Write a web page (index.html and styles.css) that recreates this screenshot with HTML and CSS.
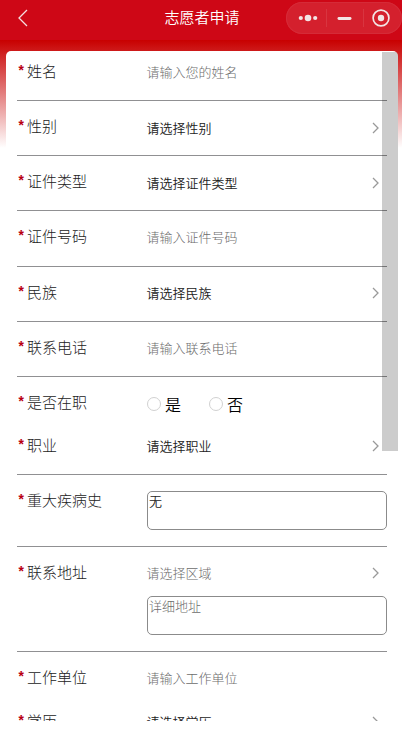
FILE: index.html
```html
<!DOCTYPE html>
<html lang="zh-CN">
<head>
<meta charset="utf-8">
<title>志愿者申请</title>
<link rel="stylesheet" href="styles.css">
</head>
<body>
<div class="app">
  <header class="nav">
    <svg class="back" width="12" height="20" viewBox="0 0 12 20"><path d="M10 2L2 10l8 8"/></svg>
    <h1 class="title">志愿者申请</h1>
    <div class="capsule">
      <svg width="116" height="32" viewBox="0 0 116 32">
        <g class="fill"><circle cx="14.8" cy="16" r="2.1"/><circle cx="22" cy="16" r="3.3"/><circle cx="29.2" cy="16" r="2.1"/><rect x="51.5" y="15.1" width="14" height="2.8" rx="1.4"/><circle cx="95" cy="16" r="3.2"/></g>
        <circle class="ring" cx="95" cy="16" r="7.9"/>
        <path class="divider" d="M40.5 7v18M77.5 7v18"/>
      </svg>
    </div>
  </header>
  <main class="page">
    <form class="card">
      <div class="row first"><label class="label"><i>*</i>姓名</label><div class="value hint">请输入您的姓名</div></div>
      <div class="row"><label class="label"><i>*</i>性别</label><div class="value select low">请选择性别<svg class="arrow" viewBox="0 0 8 12"><path d="M1 1l5 5-5 5"/></svg></div></div>
      <div class="row"><label class="label"><i>*</i>证件类型</label><div class="value select low">请选择证件类型<svg class="arrow" viewBox="0 0 8 12"><path d="M1 1l5 5-5 5"/></svg></div></div>
      <div class="row tall"><label class="label"><i>*</i>证件号码</label><div class="value hint">请输入证件号码</div></div>
      <div class="row"><label class="label"><i>*</i>民族</label><div class="value select">请选择民族<svg class="arrow" viewBox="0 0 8 12"><path d="M1 1l5 5-5 5"/></svg></div></div>
      <div class="row"><label class="label"><i>*</i>联系电话</label><div class="value hint">请输入联系电话</div></div>
      <div class="row plain"><label class="label"><i>*</i>是否在职</label><div class="value radios"><span class="radio"><b></b>是</span><span class="radio"><b></b>否</span></div></div>
      <div class="row"><label class="label"><i>*</i>职业</label><div class="value select">请选择职业<svg class="arrow" viewBox="0 0 8 12"><path d="M1 1l5 5-5 5"/></svg></div></div>
      <div class="row illness"><label class="label"><i>*</i>重大疾病史</label><div class="box">无</div></div>
      <div class="row address"><label class="label"><i>*</i>联系地址</label><div class="stack"><div class="value select hint">请选择区域<svg class="arrow" viewBox="0 0 8 12"><path d="M1 1l5 5-5 5"/></svg></div><div class="box hint">详细地址</div></div></div>
      <div class="row work"><label class="label"><i>*</i>工作单位</label><div class="value hint">请输入工作单位</div></div>
      <div class="row"><label class="label"><i>*</i>学历</label><div class="value select">请选择学历<svg class="arrow" viewBox="0 0 8 12"><path d="M1 1l5 5-5 5"/></svg></div></div>
      <div class="scrollbar"></div>
    </form>
  </main>
</div>
</body>
</html>
```
FILE: styles.css
```css
* { box-sizing: border-box; }
body {
  margin: 0;
  background: #fff;
  font-family: "Noto Sans CJK SC", sans-serif;
  font-weight: 350;
  color: #222;
}
.app { height: 730px; overflow: hidden; }
.nav {
  position: relative;
  height: 40px;
  padding-bottom: 6px;
  display: flex;
  align-items: center;
  justify-content: center;
  background: #ce0716;
}
.title { margin: 0 0 0 2px; font-size: 15px; line-height: 20px; font-weight: 350; color: #fff; }
.back { position: absolute; left: 16.5px; top: 8px; fill: none; stroke: #f5dedf; stroke-width: 1.3; }
.capsule {
  position: absolute;
  left: 286px;
  top: 2px;
  width: 116px;
  height: 32px;
  border-radius: 16px;
  background: #d4202d;
  box-shadow: inset 0 0 0 1px #d52b38;
}
.capsule svg { display: block; }
.fill { fill: #f3e5e5; }
.ring { fill: none; stroke: #f3e5e5; stroke-width: 1.7; }
.divider { stroke: #d83540; stroke-width: 1; }
.page {
  height: 681px;
  padding: 11px 4px 0 6px;
  overflow: hidden;
  background: linear-gradient(#c80000, #fff 108px);
}
.card {
  position: relative;
  height: 670px;
  padding: 0 11px;
  overflow: hidden;
  border-radius: 5px 5px 0 0;
  background: #fff;
}
.row {
  display: flex;
  align-items: flex-start;
  height: 55px;
  padding-top: 16px;
  border-bottom: 1px solid #909092;
}
.first { height: 50px; padding-top: 11px; }
.tall { height: 56px; }
.plain { height: 43px; border: 0; }
.illness { height: 72px; }
.address { height: 105px; }
.work { height: 44px; border: 0; }
.label { flex: 0 0 130px; display: flex; margin-top: -1px; font-size: 15px; line-height: 20px; font-weight: 300; }
.label i {
  width: 10px;
  padding-top: 1px;
  color: #b80012;
  font-family: "Liberation Mono", monospace;
  font-style: normal;
  font-weight: 700;
  font-size: 14px;
}
.value { flex: 1; font-size: 13px; line-height: 20px; text-indent: -.5px; }
.hint { color: #6c6c6c; font-weight: 300; }
.select { display: flex; align-items: center; justify-content: space-between; }
.low { padding-top: 1px; }
.arrow { width: 8px; height: 12px; margin-right: 7px; fill: none; stroke: #999; stroke-width: 1.3; }
.radios { display: flex; gap: 28px; padding-top: 1px; color: #000; text-indent: 0; }
.radio { display: flex; align-items: center; gap: 4px; font-size: 16px; }
.radio b { width: 14px; height: 14px; border: 1px solid #d1d1d1; border-radius: 50%; }
.box {
  width: 240px;
  height: 39px;
  padding: 0 1px;
  border: 1px solid #8b8b8b;
  border-radius: 5px;
  font-size: 13px;
  line-height: 18px;
}
.stack { flex: 1; }
.stack .box { margin-top: 13px; }
.scrollbar {
  position: absolute;
  top: 1px;
  right: 0;
  width: 16px;
  height: 399px;
  background: rgba(0, 0, 0, .2);
}
```
